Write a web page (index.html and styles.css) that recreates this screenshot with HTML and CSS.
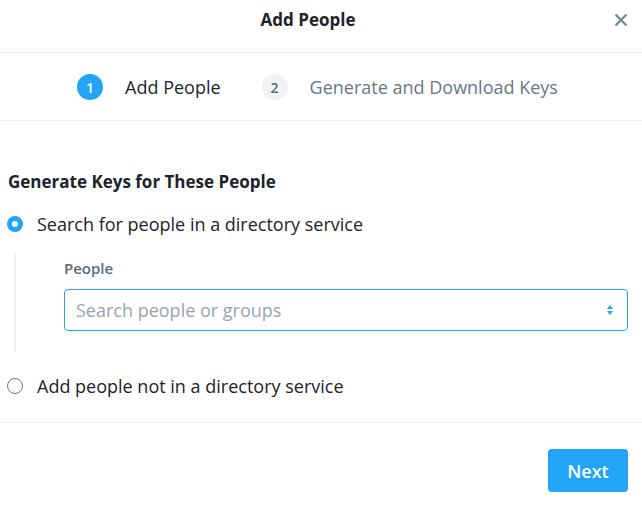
FILE: index.html
```html
<!DOCTYPE html>
<html>
<head>
<meta charset="utf-8">
<link rel="stylesheet" href="styles.css">
</head>
<body>
<div class="modal">
  <header class="head">
    <h1 class="title">Add People</h1>
    <button class="close" aria-label="Close">
      <svg width="14" height="14" viewBox="0 0 14 14"><path d="M1.5 1.5 L12.5 12.5 M12.5 1.5 L1.5 12.5" stroke="#7b8a99" stroke-width="2.4" stroke-linecap="butt"/></svg>
    </button>
  </header>
  <nav class="steps">
    <div class="step active"><span class="num">1</span><span class="label">Add People</span></div>
    <div class="step"><span class="num">2</span><span class="label">Generate and Download Keys</span></div>
  </nav>
  <section class="body">
    <h2 class="section-title">Generate Keys for These People</h2>
    <label class="radio-row"><span class="radio checked"></span><span class="radio-text">Search for people in a directory service</span></label>
    <div class="nested">
      <div class="field-label">People</div>
      <div class="select">
        <span class="placeholder">Search people or groups</span>
        <svg class="arrows" width="8" height="12" viewBox="0 0 8 12"><path d="M4 1 L7 5 L1 5 Z" fill="#2aa4f2"/><path d="M4 11 L7 7 L1 7 Z" fill="#2aa4f2"/></svg>
      </div>
    </div>
    <label class="radio-row second"><span class="radio"></span><span class="radio-text">Add people not in a directory service</span></label>
  </section>
  <footer class="foot">
    <button class="next">Next</button>
  </footer>
</div>
</body>
</html>
```

FILE: styles.css
```css
* { box-sizing: border-box; }
html, body { margin: 0; padding: 0; background: #fff; }
body {
  font-family: "Open Sans", "Liberation Sans", sans-serif;
  color: #1d232b;
  width: 642px;
  height: 505px;
  overflow: hidden;
}
.modal { width: 642px; }
.head {
  height: 53px;
  display: flex;
  align-items: center;
  justify-content: center;
  position: relative;
  border-bottom: 1px solid #eceef0;
  padding-right: 26px;
}
.title {
  margin: 0;
  font-size: 17px;
  font-weight: 700;
  color: #1d232b;
  position: relative;
  top: -7px;
}
.close {
  position: absolute;
  right: 14px;
  top: 13px;
  border: 0;
  background: none;
  padding: 0;
  width: 14px;
  height: 14px;
  display: flex;
}
.steps {
  height: 68px;
  display: flex;
  align-items: center;
  justify-content: center;
  gap: 41px;
  border-bottom: 1px solid #eceef0;
  padding: 1px 7px 0 0;
}
.step { display: flex; align-items: center; gap: 22px; }
.num {
  width: 26px;
  height: 26px;
  border-radius: 50%;
  background: #f1f2f4;
  color: #5d6b79;
  font-size: 14px;
  font-weight: 600;
  display: flex;
  align-items: center;
  justify-content: center;
}
.step.active .num { background: #23a5f7; color: #fff; }
.label { font-size: 18px; color: #6a7784; }
.step.active .label { color: #1d232b; }
.body { padding: 49px 0 0 7px; height: 302px; border-bottom: 1px solid #eceef0; }
.section-title {
  margin: 0 0 0 1px;
  font-size: 17px;
  font-weight: 700;
  color: #1d232b;
  line-height: 24px;
}
.radio-row { display: flex; align-items: center; gap: 14px; margin-top: 18px; height: 24px; }
.radio {
  width: 16px;
  height: 16px;
  border-radius: 50%;
  border: 1.5px solid #6a7784;
  flex: none;
}
.radio.checked { border: 5px solid #23a5f7; }
.radio-text { font-size: 18px; color: #1d232b; }
.nested {
  margin: 16px 0 0 7px;
  border-left: 2px solid #f0f1f2;
  padding: 7px 0 21px 48px;
  width: 614px;
}
.field-label { font-size: 15px; font-weight: 600; color: #5d6b79; line-height: 18px; }
.select {
  margin-top: 12px;
  height: 42px;
  border: 1px solid #2aa4f2;
  border-radius: 4px;
  display: flex;
  align-items: center;
  justify-content: space-between;
  padding: 0 13px 0 11px;
}
.placeholder { font-size: 18px; color: #9aa3ad; }
.radio-row.second { margin-top: 22px; }
.foot { display: flex; justify-content: flex-end; padding: 26px 14px 0 0; }
.next {
  width: 80px;
  height: 43px;
  border: 0;
  border-radius: 4px;
  background: #23a5f7;
  color: #fff;
  font-family: inherit;
  font-size: 18px;
  font-weight: 600;
}
```
